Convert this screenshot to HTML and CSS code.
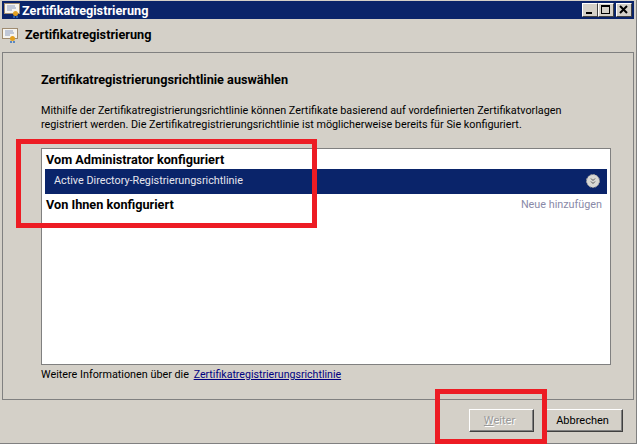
FILE: index.html

```html
<!DOCTYPE html>
<html lang="de">
<head>
  <meta charset="UTF-8">
  <title>Zertifikatregistrierung</title>
  <link rel="stylesheet" href="styles.css">
</head>
<body>

  <div class="window">
    <div class="titlebar">
      <svg class="cert-icon" width="17" height="15" viewBox="0 0 17 15">
        <rect x="0.5" y="0.5" width="15" height="10" fill="#f6f4ef" stroke="#a08c70"/>
        <path d="M3 3h8M3 5h9M3 7h5" stroke="#8a9cc0"/>
        <circle cx="11.5" cy="10.5" r="2.5" fill="#e2a020"/>
        <path d="M10 13v2M13 13v2" stroke="#2f6fc0" stroke-width="1.5"/>
      </svg>
      <span class="title">Zertifikatregistrierung</span>
      <div class="caption-buttons">
        <div class="cap-btn"><svg width="14" height="12" viewBox="0 0 14 12"><path d="M3 8h6v2H3z" fill="#000"/></svg></div>
        <div class="cap-btn"><svg width="14" height="12" viewBox="0 0 14 12"><path d="M2 1h9v9H2zM3 3v6h7V3z" fill="#000" fill-rule="evenodd"/></svg></div>
        <div class="cap-btn cap-close"><svg width="14" height="12" viewBox="0 0 14 12"><path d="M3 2l7 7M10 2l-7 7" stroke="#000" stroke-width="2"/></svg></div>
      </div>
    </div>

    <div class="wizard-head">
      <svg class="cert-icon" width="17" height="15" viewBox="0 0 17 15">
        <rect x="0.5" y="0.5" width="15" height="10" fill="#f6f4ef" stroke="#a08c70"/>
        <path d="M3 3h8M3 5h9M3 7h5" stroke="#8a9cc0"/>
        <circle cx="10.5" cy="10.5" r="2.5" fill="#e2a020"/>
        <path d="M9 13v2M12 13v2" stroke="#2f6fc0" stroke-width="1.5"/>
      </svg>
      <span class="wizard-title">Zertifikatregistrierung</span>
    </div>

    <div class="panel">
      <h2>Zertifikatregistrierungsrichtlinie auswählen</h2>
      <p class="intro">Mithilfe der Zertifikatregistrierungsrichtlinie können Zertifikate basierend auf vordefinierten Zertifikatvorlagen<br>registriert werden. Die Zertifikatregistrierungsrichtlinie ist möglicherweise bereits für Sie konfiguriert.</p>

      <div class="list">
        <div class="group">Vom Administrator konfiguriert</div>
        <div class="row-selected">
          <span>Active Directory-Registrierungsrichtlinie</span>
          <svg width="14" height="14" viewBox="0 0 14 14">
            <circle cx="7" cy="7" r="6.5" fill="#d8d8d4" stroke="#9a9a9a" stroke-dasharray="2 1"/>
            <path d="M5 4.5l2 2 2-2M5 7.5l2 2 2-2" fill="none" stroke="#555" stroke-width="1"/>
          </svg>
        </div>
        <div class="group group-add">
          <span>Von Ihnen konfiguriert</span>
          <span class="add-link">Neue hinzufügen</span>
        </div>
      </div>

      <p class="more">Weitere Informationen über die <a href="#">Zertifikatregistrierungsrichtlinie</a></p>
    </div>

    <div class="footer">
      <button class="btn" disabled><u>W</u>eiter</button>
      <button class="btn">Abbrechen</button>
    </div>
  </div>

  <div class="mark mark-list"></div>
  <div class="mark mark-next"></div>

</body>
</html>
```

FILE: styles.css

```css
html, body {
  margin: 0;
  padding: 0;
}

body {
  width: 637px;
  height: 444px;
  overflow: hidden;
  position: relative;
  background: #fff;
  font-family: Roboto, "Open Sans", sans-serif;
  font-size: 10.8px;
  color: #000;
}

.window {
  box-sizing: border-box;
  width: 637px;
  height: 444px;
  padding: 1px 2px 0 2px;
  background: #d4d0c8;
  border-right: 1px solid #808080;
  border-bottom: 1px solid #808080;
}

.titlebar {
  display: flex;
  align-items: center;
  width: 632px;
  height: 18px;
  padding-left: 2px;
  box-sizing: border-box;
  background: #0a246a;
  color: #fff;
}

.titlebar .cert-icon {
  margin-right: 1px;
}

.title {
  font-size: 12.7px;
  font-weight: 700;
}

.caption-buttons {
  display: flex;
  margin-left: auto;
  margin-right: 2px;
}

.cap-btn {
  box-sizing: border-box;
  width: 16px;
  height: 14px;
  background: #d4d0c8;
  border: 1px solid;
  border-color: #fff #404040 #404040 #fff;
  display: flex;
  align-items: center;
  justify-content: center;
  overflow: hidden;
}

.cap-close {
  margin-left: 2px;
}

.wizard-head {
  display: flex;
  align-items: center;
  height: 33px;
}

.wizard-title {
  margin: 0 0 2px 6px;
  font-size: 12.7px;
  font-weight: 700;
}

.panel {
  box-sizing: border-box;
  width: 632px;
  height: 348px;
  padding: 0 22px 0 38px;
  border: 1px solid #808080;
}

h2 {
  margin: 19px 0 0 0;
  font-size: 12.7px;
  line-height: 15px;
  font-weight: 700;
}

.intro {
  margin: 17px 0 0 0;
  line-height: 14px;
}

.list {
  box-sizing: border-box;
  width: 570px;
  height: 217px;
  margin-top: 16px;
  padding: 1px 3px;
  background: #fff;
  border: 1px solid #808080;
}

.group {
  height: 19px;
  line-height: 19px;
  font-size: 12.7px;
  font-weight: 700;
  padding-left: 1px;
}

.row-selected {
  box-sizing: border-box;
  display: flex;
  align-items: center;
  justify-content: space-between;
  height: 25px;
  padding: 0 7px 2px 9px;
  background: #0a246a;
  color: #e6e6ee;
}

.group-add {
  display: flex;
  justify-content: space-between;
  height: 22px;
  line-height: 22px;
}

.add-link {
  font-size: 10.8px;
  font-weight: 400;
  color: #8a8aa8;
  padding-right: 5px;
}

.more {
  margin: 2px 0 0 0;
  line-height: 15px;
}

.more a {
  margin-left: 2px;
  font-size: 10.6px;
  color: #000080;
}

.footer {
  display: flex;
  justify-content: flex-end;
  gap: 12px;
  padding: 9px 11px 0 0;
}

.btn {
  box-sizing: border-box;
  width: 65px;
  height: 23px;
  padding: 0 4px 0 0;
  background: #d4d0c8;
  border: 1px solid;
  border-color: #fff #404040 #404040 #fff;
  box-shadow: inset -1px -1px 0 #808080;
  font-family: inherit;
  font-size: 11px;
  color: #000;
}

.btn:last-child {
  width: 77px;
}

.btn:disabled {
  color: #9a9a9a;
  text-shadow: 1px 1px 0 #fff;
}

.mark {
  position: absolute;
  box-sizing: border-box;
  border: 5px solid #ed1c24;
}

.mark-list {
  left: 16px;
  top: 139px;
  width: 301px;
  height: 89px;
}

.mark-next {
  left: 435px;
  top: 389px;
  width: 112px;
  height: 55px;
}
```
